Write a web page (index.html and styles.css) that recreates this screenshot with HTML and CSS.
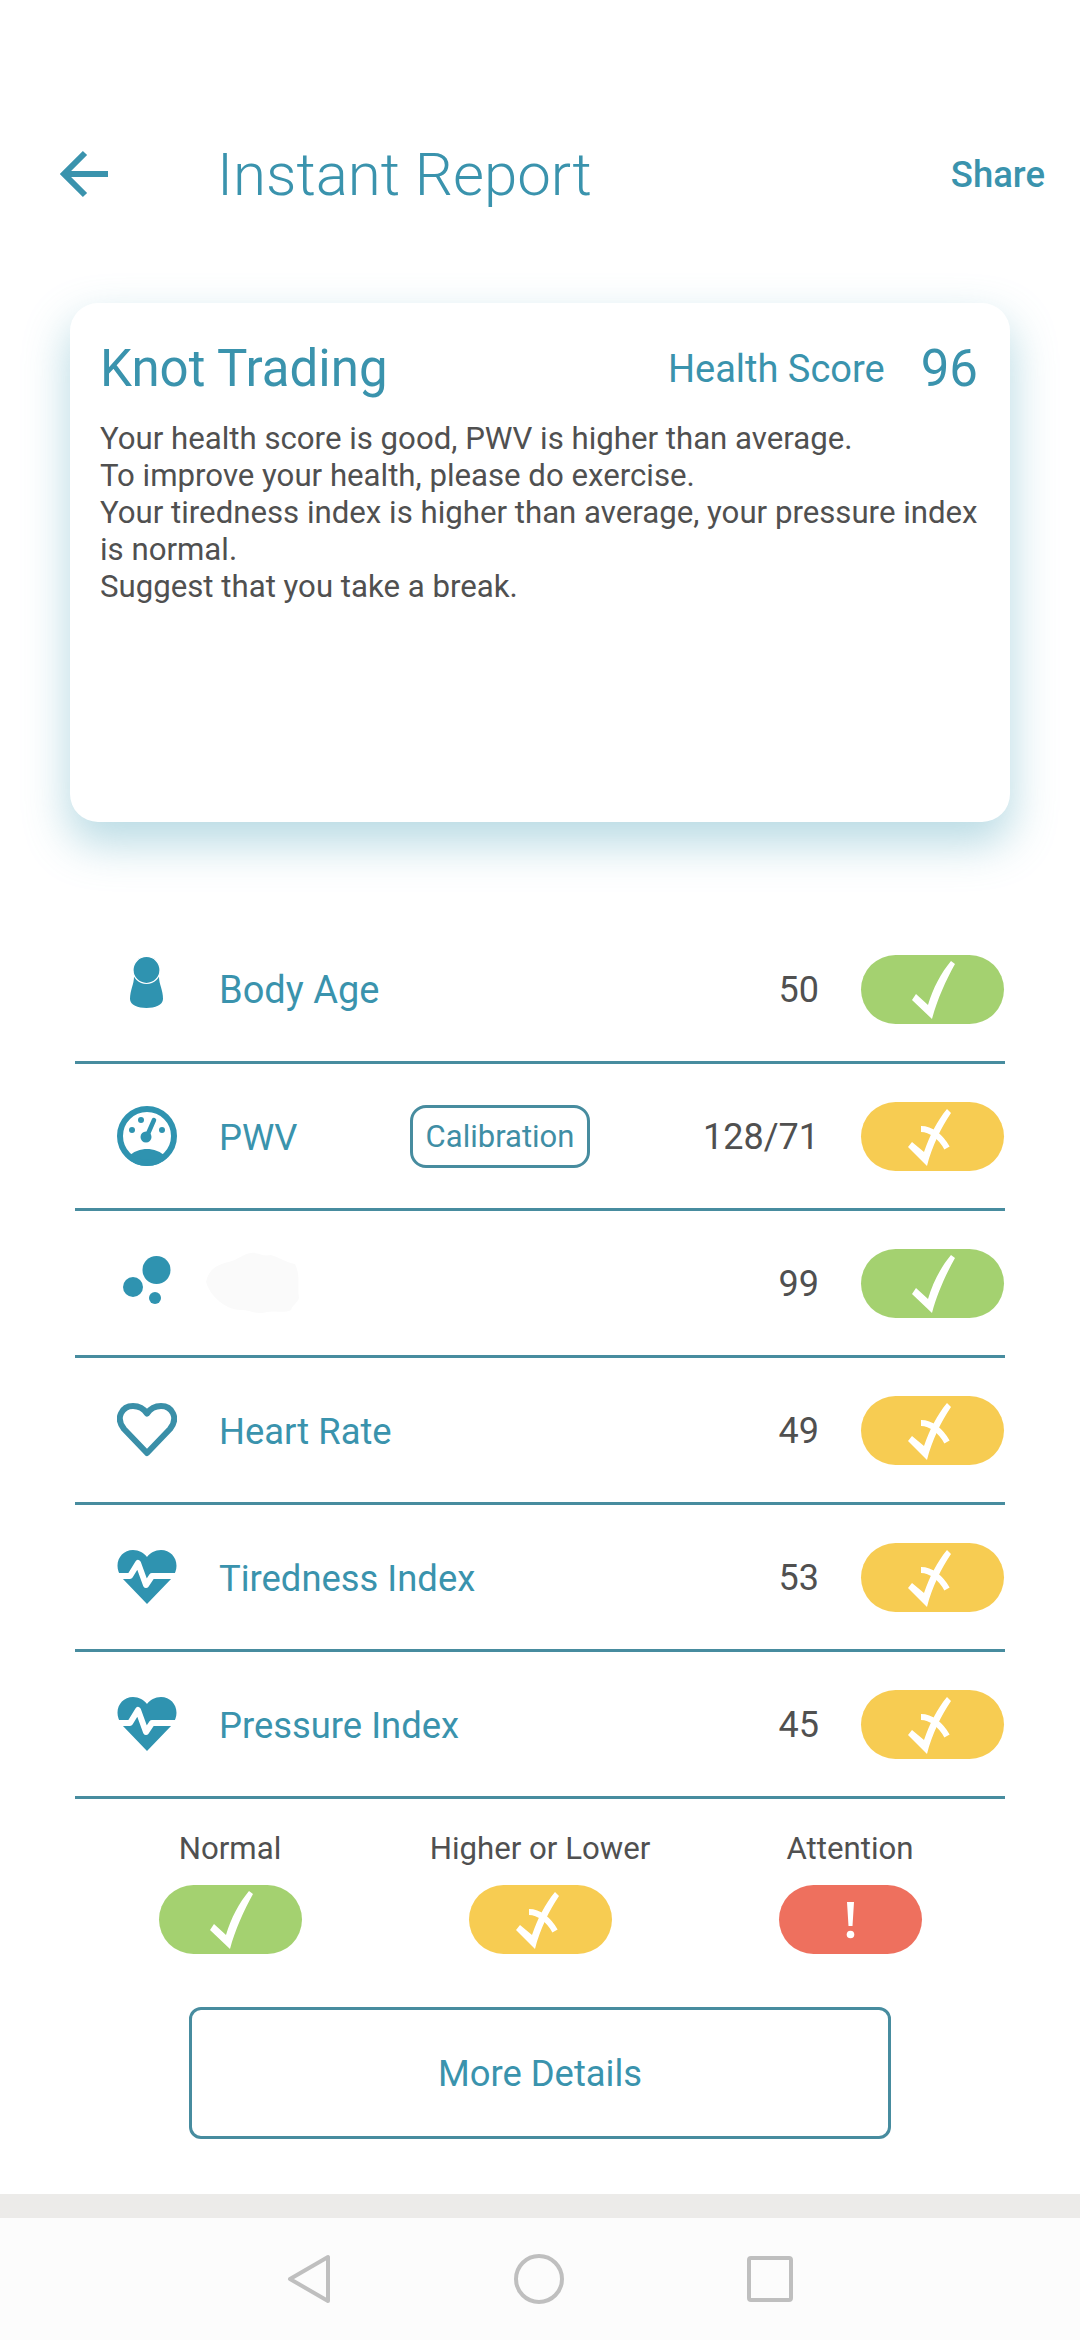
FILE: index.html
```html
<!DOCTYPE html>
<html lang="en">

<head>
    <meta charset="UTF-8">
    <meta name="viewport" content="width=device-width, initial-scale=1.0">
    <title>Instant Report</title>
    <link rel="stylesheet" href="styles.css">
</head>

<body>
    <svg class="defs" width="0" height="0">
        <symbol id="ok" viewBox="0 0 143 69">
            <path fill="#fff" d="M51 45 L55 39 L67 50 C72 33 80 18 90 6 L94 9 C85 25 76 45 71 64 Z" />
        </symbol>
        <symbol id="warn" viewBox="0 0 143 69">
            <path fill="#fff" d="M47 45 L51 40 L63 50 C69 33 76 19 86 7 L90 11 C80 26 71 44 66 64 Z" />
            <path fill="none" stroke="#fff" stroke-width="6" d="M60 27 C70 27 80 35 86 46" />
        </symbol>
        <symbol id="pulse" viewBox="0 0 60 54">
            <path fill="#2f93b0" d="M30 54 L5 28 C-5 15 3 0 16 0 C22 0 27 3 30 7 C33 3 38 0 44 0 C57 0 65 15 55 28 Z" />
            <path fill="none" stroke="#fff" stroke-width="6" stroke-linejoin="round"
                d="M-2 26 H13 L21 13 L29 35 L35 26 H62" />
        </symbol>
    </svg>

    <header class="topbar">
        <svg class="back" width="48" height="48" viewBox="0 0 48 48">
            <path fill="none" stroke="#3a93ad" stroke-width="6" d="M48 24 H4 M25 3 L4 24 L25 45" />
        </svg>
        <h1>Instant Report</h1>
        <a class="share">Share</a>
    </header>

    <section class="card">
        <div class="card-head">
            <h2>Knot Trading</h2>
            <span class="score-label">Health Score</span>
            <span class="score">96</span>
        </div>
        <p>Your health score is good, PWV is higher than average.<br>
            To improve your health, please do exercise.<br>
            Your tiredness index is higher than average, your pressure index is normal.<br>
            Suggest that you take a break.</p>
    </section>

    <ul class="rows">
        <li>
            <div class="icon">
                <svg class="icon-person" width="34" height="51" viewBox="0 0 34 51">
                    <path fill="#2f93b0"
                        d="M4 20 C4 27 0 33 0 42 C0 48 8 51 16.500 51 C25 51 33 48 33 42 C33 33 29 27 29 20 Z" />
                    <circle cx="16.500" cy="13" r="13.500" fill="#2f93b0" stroke="#fff" stroke-width="1.200" />
                </svg>
            </div>
            <span class="label label-large">Body Age</span>
            <span class="value">50</span>
            <svg class="pill green"><use href="#ok" /></svg>
        </li>
        <li>
            <div class="icon">
                <svg width="60" height="60" viewBox="0 0 60 60">
                    <path fill="#2f93b0" d="M10 52 C16 45 24 43 30 43 C36 43 44 45 50 52 A29 29 0 0 1 10 52 Z" />
                    <circle cx="30" cy="30" r="27" fill="none" stroke="#2f93b0" stroke-width="6" />
                    <circle cx="29" cy="31" r="5.500" fill="#2f93b0" />
                    <path stroke="#2f93b0" stroke-width="4.500" stroke-linecap="round" d="M30 30 L37 14" />
                    <circle cx="24" cy="14" r="3" fill="#2f93b0" />
                    <circle cx="15" cy="24" r="3" fill="#2f93b0" />
                    <circle cx="45" cy="24" r="3" fill="#2f93b0" />
                </svg>
            </div>
            <span class="label label-short">PWV</span>
            <button class="calibrate">Calibration</button>
            <span class="value">128/71</span>
            <svg class="pill yellow"><use href="#warn" /></svg>
        </li>
        <li>
            <div class="icon">
                <svg width="60" height="60" viewBox="0 0 60 60">
                    <circle cx="39.500" cy="17" r="14" fill="#2f93b0" />
                    <circle cx="16" cy="34" r="10" fill="#2f93b0" />
                    <circle cx="38" cy="45" r="6" fill="#2f93b0" />
                </svg>
            </div>
            <svg class="smudge" width="96" height="63" viewBox="0 0 96 63">
                <path fill="#fafafa"
                    d="M1 30 C4 16 14 12 24 10 C32 8 38 2 46 1 C54 0 58 5 66 3 C76 6 80 10 90 12 C96 24 92 36 94 46 C92 52 88 52 86 58 C78 62 72 58 62 60 C50 63 46 58 36 58 C22 58 6 46 1 30 Z" />
            </svg>
            <span class="value">99</span>
            <svg class="pill green"><use href="#ok" /></svg>
        </li>
        <li>
            <div class="icon">
                <svg width="60" height="54" viewBox="0 0 60 54">
                    <path fill="none" stroke="#3a8fa8" stroke-width="6" stroke-linejoin="round"
                        d="M30 50 L7 26 C-2 15 5 3 16 3 C22 3 27 6 30 10.500 C33 6 38 3 44 3 C55 3 62 15 53 26 Z" />
                </svg>
            </div>
            <span class="label">Heart Rate</span>
            <span class="value">49</span>
            <svg class="pill yellow"><use href="#warn" /></svg>
        </li>
        <li>
            <div class="icon">
                <svg width="60" height="54"><use href="#pulse" /></svg>
            </div>
            <span class="label">Tiredness Index</span>
            <span class="value">53</span>
            <svg class="pill yellow"><use href="#warn" /></svg>
        </li>
        <li>
            <div class="icon">
                <svg width="60" height="54"><use href="#pulse" /></svg>
            </div>
            <span class="label">Pressure Index</span>
            <span class="value">45</span>
            <svg class="pill yellow"><use href="#warn" /></svg>
        </li>
    </ul>

    <div class="legend">
        <div class="legend-item">
            <span>Normal</span>
            <svg class="pill green"><use href="#ok" /></svg>
        </div>
        <div class="legend-item">
            <span>Higher or Lower</span>
            <svg class="pill yellow"><use href="#warn" /></svg>
        </div>
        <div class="legend-item">
            <span>Attention</span>
            <svg class="pill red" viewBox="0 0 143 69">
                <path fill="#fff" d="M68 17 H75 L73.500 41 H69.500 Z" />
                <circle cx="71.500" cy="49.500" r="3.800" fill="#fff" />
            </svg>
        </div>
    </div>

    <button class="details">More Details</button>

    <div class="band"></div>

    <nav class="navbar">
        <svg width="44" height="50" viewBox="0 0 44 50">
            <path fill="none" stroke="#bfbfbf" stroke-width="4" stroke-linejoin="round" d="M41 3 V47 L3 25 Z" />
        </svg>
        <svg width="50" height="50" viewBox="0 0 50 50">
            <circle cx="25" cy="25" r="23" fill="none" stroke="#bfbfbf" stroke-width="4" />
        </svg>
        <svg width="46" height="46" viewBox="0 0 46 46">
            <rect x="2" y="2" width="42" height="42" rx="2" fill="none" stroke="#bfbfbf" stroke-width="4" />
        </svg>
    </nav>
</body>

</html>
```

FILE: styles.css
```css
* {
    box-sizing: border-box;
}

body {
    margin: 0;
    height: 2340px;
    overflow: hidden;
    display: flex;
    flex-direction: column;
    background-color: #fff;
    font-family: "Roboto", "Liberation Sans", sans-serif;
    color: #505050;
}

.defs {
    position: absolute;
}

.topbar {
    display: flex;
    align-items: center;
    height: 88px;
    margin-top: 130px;
    padding: 0 35px 0 60px;
    color: #3a93ad;
}

.topbar h1 {
    flex: 1;
    margin: 0 0 0 109px;
    font-size: 60px;
    font-weight: 300;
}

.share {
    font-size: 36.500px;
    font-weight: 500;
}

.card {
    width: 940px;
    height: 519px;
    margin: 85px 0 0 70px;
    padding: 36px 32px 0 30px;
    background-color: #fff;
    border-radius: 28px;
    box-shadow: 0 20px 44px 2px rgba(100, 175, 195, 0.45);
}

.card-head {
    display: flex;
    align-items: center;
    color: #3a93ad;
}

.card-head h2 {
    flex: 1;
    margin: 0;
    font-size: 51px;
    font-weight: 400;
}

.score-label {
    font-size: 38px;
}

.score {
    margin-left: 36px;
    font-size: 51px;
}

.card p {
    margin: 22px 0 0;
    font-size: 31.200px;
    line-height: 37px;
}

.rows {
    list-style: none;
    margin: 95px 75px 0;
    padding: 0;
}

.rows>li {
    display: flex;
    align-items: center;
    height: 147px;
    padding-right: 1px;
    border-bottom: 3px solid #478c9f;
}

.icon {
    display: flex;
    justify-content: center;
    width: 144px;
}

.icon-person {
    margin-bottom: 14px;
}

.label {
    flex: 1;
    margin-top: 2px;
    font-size: 36.400px;
    color: #3a93ad;
}

.label-large {
    font-size: 38px;
}

.label-short {
    flex: 0 0 191px;
}

.calibrate {
    width: 180px;
    height: 63px;
    padding: 0;
    border: 3px solid #478c9f;
    border-radius: 16px;
    background: none;
    font-family: inherit;
    font-size: 31px;
    color: #3f8ea5;
}

.smudge {
    margin-left: -14px;
}

.value {
    margin-top: 2px;
    margin-left: auto;
    font-size: 36px;
}

.pill {
    flex: none;
    width: 143px;
    height: 69px;
    border-radius: 35px;
}

.rows .pill {
    margin-left: 42px;
}

.green {
    background-color: #a4d170;
}

.yellow {
    background-color: #f7cc52;
}

.red {
    background-color: #ee705e;
}

.legend {
    display: grid;
    grid-template-columns: repeat(3, 1fr);
    margin: 31px 75px 0;
}

.legend-item {
    display: flex;
    flex-direction: column;
    align-items: center;
    gap: 18px;
    font-size: 31.200px;
}

.details {
    width: 702px;
    height: 132px;
    margin: 53px 0 0 189px;
    border: 3px solid #478c9f;
    border-radius: 12px;
    background: none;
    font-family: inherit;
    font-size: 36.400px;
    color: #3a93ad;
}

.band {
    height: 24px;
    margin-top: auto;
    background-color: #ecebe9;
}

.navbar {
    display: flex;
    align-items: center;
    justify-content: center;
    gap: 183px;
    height: 122px;
    background-color: #fcfcfc;
}
```
